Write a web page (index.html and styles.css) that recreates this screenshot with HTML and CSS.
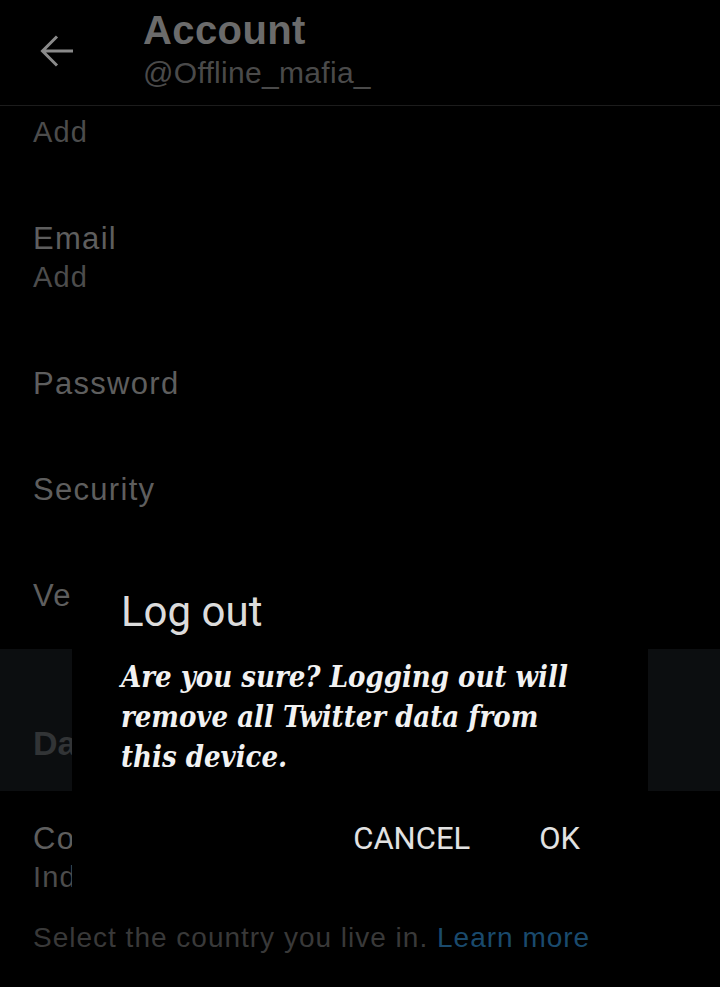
FILE: index.html
```
<!DOCTYPE html>
<html lang="en">
<head>
<meta charset="utf-8">
<title>Account</title>
<link rel="stylesheet" href="styles.css">
</head>
<body>
<div class="screen">
  <header class="appbar">
    <span class="back" aria-label="Back">
      <svg width="34" height="32" viewBox="0 0 34 32"><path d="M17 1.5 L2.5 16 L17 30.5 M2.5 16 H33" fill="none" stroke="#8a8a8a" stroke-width="3"/></svg>
    </span>
    <div class="titles">
      <h1 class="title">Account</h1>
      <div class="handle">@Offline_mafia_</div>
    </div>
  </header>

  <main class="list">
    <div class="item item-first">
      <div class="sub">Add</div>
    </div>
    <div class="item">
      <div class="label">Email</div>
      <div class="sub">Add</div>
    </div>
    <div class="item">
      <div class="label">Password</div>
    </div>
    <div class="item">
      <div class="label">Security</div>
    </div>
    <div class="item">
      <div class="label">Verified</div>
    </div>
    <div class="section">Data and permissions</div>
    <div class="item item-country">
      <div class="label">Country</div>
      <div class="sub">India</div>
    </div>
    <p class="note">Select the country you live in. <span class="link">Learn more</span></p>
  </main>

  <div class="dialog" role="dialog">
    <h2 class="dialog-title">Log out</h2>
    <p class="dialog-body">Are you sure? Logging out will<br>remove all Twitter data from<br>this device.</p>
    <div class="dialog-actions">
      <span class="btn">CANCEL</span>
      <span class="btn">OK</span>
    </div>
  </div>
</div>
</body>
</html>
```
FILE: styles.css
```
html, body {
  margin: 0;
  padding: 0;
  background: #000;
}
.screen {
  position: relative;
  width: 720px;
  height: 987px;
  overflow: hidden;
  background: #000;
  font-family: "Liberation Sans", Arial, sans-serif;
}
.appbar {
  height: 105px;
  border-bottom: 1px solid #1c1c1c;
  display: flex;
  align-items: center;
  padding-left: 40px;
}
.back {
  display: flex;
  width: 34px;
  height: 32px;
  margin-right: 71px;
  margin-top: -3px;
}
.titles {
  display: flex;
  flex-direction: column;
  margin-left: -2px;
  margin-top: -4px;
}
.title {
  margin: -2px 0 0;
  font-size: 40px;
  line-height: 42px;
  font-weight: bold;
  letter-spacing: 0.4px;
  color: #6b6b6b;
}
.handle {
  margin-top: 4px;
  font-size: 30px;
  line-height: 36px;
  letter-spacing: 0.3px;
  color: #4a4a4a;
}
.list {
  display: flex;
  flex-direction: column;
}
.item {
  padding: 33.5px 33px;
}
.item-first {
  padding-top: 7px;
}
.label {
  font-size: 31px;
  line-height: 39px;
  letter-spacing: 1.3px;
  color: #5e5e5e;
}
.sub {
  font-size: 29px;
  line-height: 39px;
  letter-spacing: 1.1px;
  color: #4c4c4c;
}
.section {
  height: 142px;
  box-sizing: border-box;
  background: #0c0e10;
  display: flex;
  align-items: flex-end;
  padding: 0 33px 28px;
  font-size: 34px;
  line-height: 40px;
  font-weight: bold;
  color: #323436;
}
.item-country {
  padding-top: 28.5px;
  padding-bottom: 23px;
}
.note {
  margin: 0;
  padding: 0 33px;
  font-size: 28px;
  line-height: 36px;
  letter-spacing: 1px;
  color: #393939;
}
.link {
  color: #1a4a6d;
}
.dialog {
  position: absolute;
  left: 72px;
  top: 572px;
  width: 576px;
  height: 333px;
  box-sizing: border-box;
  background: #000;
  padding: 16px 68px 0 49px;
  display: flex;
  flex-direction: column;
}
.dialog-title {
  margin: 0;
  font-family: Roboto, "Liberation Sans", sans-serif;
  font-weight: normal;
  font-size: 42px;
  line-height: 48px;
  color: #dcdcdc;
}
.dialog-body {
  margin: 21px 0 0;
  font-family: "DejaVu Serif", serif;
  font-stretch: condensed;
  font-style: italic;
  font-weight: bold;
  font-size: 29px;
  line-height: 40px;
  white-space: nowrap;
  color: #f2f2f2;
}
.dialog-actions {
  margin-top: 42px;
  display: flex;
  justify-content: flex-end;
  gap: 69px;
}
.btn {
  font-family: Roboto, "Liberation Sans", sans-serif;
  font-size: 31px;
  line-height: 40px;
  color: #e2e2e2;
}
```
